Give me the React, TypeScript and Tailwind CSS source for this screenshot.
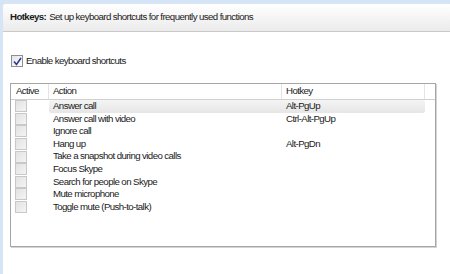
import React from 'react';

const rows = [
  { action: 'Answer call', hotkey: 'Alt-PgUp', selected: true },
  { action: 'Answer call with video', hotkey: 'Ctrl-Alt-PgUp' },
  { action: 'Ignore call', hotkey: '' },
  { action: 'Hang up', hotkey: 'Alt-PgDn' },
  { action: 'Take a snapshot during video calls', hotkey: '' },
  { action: 'Focus Skype', hotkey: '' },
  { action: 'Search for people on Skype', hotkey: '' },
  { action: 'Mute microphone', hotkey: '' },
  { action: 'Toggle mute (Push-to-talk)', hotkey: '' },
];

function Box() {
  return (
    <div className="w-[12px] h-[12px] border border-[#c8c8c8] bg-gradient-to-br from-[#e2e2e2] to-[#f4f4f4]" />
  );
}

export default function App() {
  return (
    <div
      className="w-[450px] h-[274px] bg-[#d6e5f5] pt-[4px] pl-[3px] overflow-hidden text-[#1a1a1a] text-[9.7px] tracking-[-0.6px]"
      style={{ fontFamily: '"Liberation Sans", Arial, sans-serif' }}
    >
      <div className="h-full bg-white rounded-tl-[3px] flex flex-col">
        <div className="h-[28px] flex items-center pl-[7px] bg-gradient-to-b from-white to-[#ebebeb] border-b border-[#c9c9c9] rounded-tl-[3px]">
          <span className="font-bold">Hotkeys:</span>
          <span className="ml-[3px]">Set up keyboard shortcuts for frequently used functions</span>
        </div>

        <div className="flex items-center gap-[3px] mt-[23px] ml-[8px] h-[12px]">
          <div className="w-[12px] h-[12px] border border-[#8f8f8f] bg-gradient-to-br from-[#e4e4e4] to-white flex items-center justify-center">
            <svg width="9" height="9" viewBox="0 0 9 9">
              <path d="M1 4.5 L3.5 7.5 L8 1" fill="none" stroke="#2c3d92" strokeWidth="1.6" />
            </svg>
          </div>
          <span>Enable keyboard shortcuts</span>
        </div>

        <div className="mt-[16px] ml-[7px] w-[426px] h-[164px] border border-[#a6a6a6] shadow-[1px_1px_0_#d4d4d4] flex flex-col">
          <div className="flex h-[16px] items-center border-b border-[#d0d0d0]">
            <div className="w-[37px] pl-[5px]">Active</div>
            <div className="w-[233px] pl-[4px] border-l border-[#e4e4e4] h-full flex items-center">Action</div>
            <div className="w-[143px] pl-[4px] border-l border-[#e4e4e4] h-full flex items-center">Hotkey</div>
            <div className="flex-1 border-l border-[#e4e4e4] h-full" />
          </div>
          {rows.map((r) => (
            <div key={r.action} className="flex h-[12.6px] items-center">
              <div className="w-[38px] pl-[4px] flex items-center">
                <Box />
              </div>
              <div
                className={
                  'flex h-full items-center w-[376px] ' +
                  (r.selected ? 'bg-gradient-to-b from-[#f4f4f4] to-[#e6e6e6] rounded-[2px]' : '')
                }
              >
                <div className="w-[233px] pl-[4px]">{r.action}</div>
                <div className="pl-[4px]">{r.hotkey}</div>
              </div>
            </div>
          ))}
        </div>
      </div>
    </div>
  );
}
